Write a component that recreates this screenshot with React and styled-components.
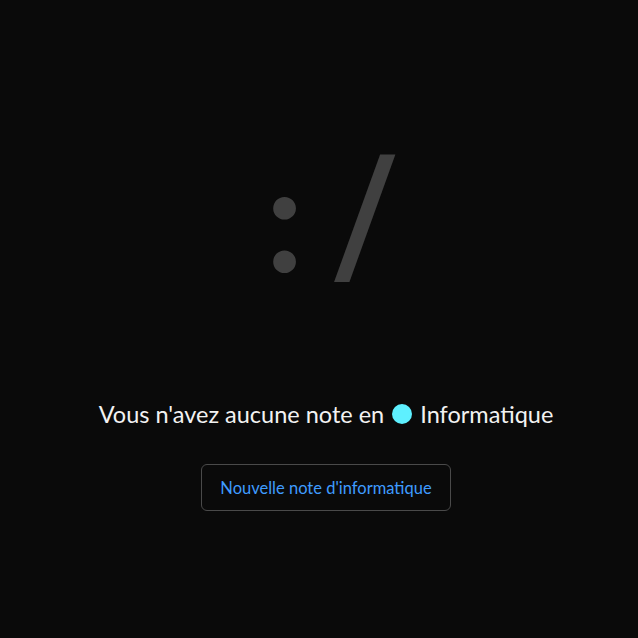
import React from 'react';
import styled, { createGlobalStyle } from 'styled-components';

const Global = createGlobalStyle`
  html, body {
    margin: 0;
    padding: 0;
    background: #0a0a0a;
  }
  body {
    font-family: "Lato", "Noto Sans", sans-serif;
  }
`;

const Page = styled.div`
  width: 638px;
  height: 638px;
  display: flex;
  flex-direction: column;
  align-items: center;
  background: #0a0a0a;
  box-sizing: border-box;
  padding-top: 134px;
  padding-left: 14px;
`;

const Face = styled.div`
  height: 160px;
  line-height: 160px;
  color: #404040;
  display: flex;
  align-items: baseline;
  gap: 30px;
  padding-left: 12px;
`;

const Eyes = styled.span`
  font-family: "Lato", sans-serif;
  font-weight: 700;
  font-size: 150px;
`;

const Mouth = styled.span`
  font-family: "Roboto", sans-serif;
  font-weight: 500;
  font-size: 166px;
`;

const Message = styled.p`
  margin: 106px 0 0;
  font-size: 23.5px;
  line-height: 28px;
  color: #f2f2f2;
  display: flex;
  align-items: center;
  gap: 8px;
`;

const Dot = styled.span`
  display: inline-block;
  width: 20px;
  height: 20px;
  border-radius: 50%;
  background: ${p => p.color};
`;

const Button = styled.button`
  margin-top: 36px;
  width: 250px;
  height: 47px;
  background: transparent;
  border: 1px solid #4a4a4a;
  border-radius: 6px;
  color: #3f9cff;
  font-family: "Lato", sans-serif;
  font-size: 16.5px;
  cursor: pointer;
`;

export default function App() {
  return (
    <>
      <Global />
      <Page>
        <Face>
          <Eyes>:</Eyes>
          <Mouth>/</Mouth>
        </Face>
        <Message>
          Vous n'avez aucune note en <Dot color="#5ef0ff" /> Informatique
        </Message>
        <Button>Nouvelle note d'informatique</Button>
      </Page>
    </>
  );
}
